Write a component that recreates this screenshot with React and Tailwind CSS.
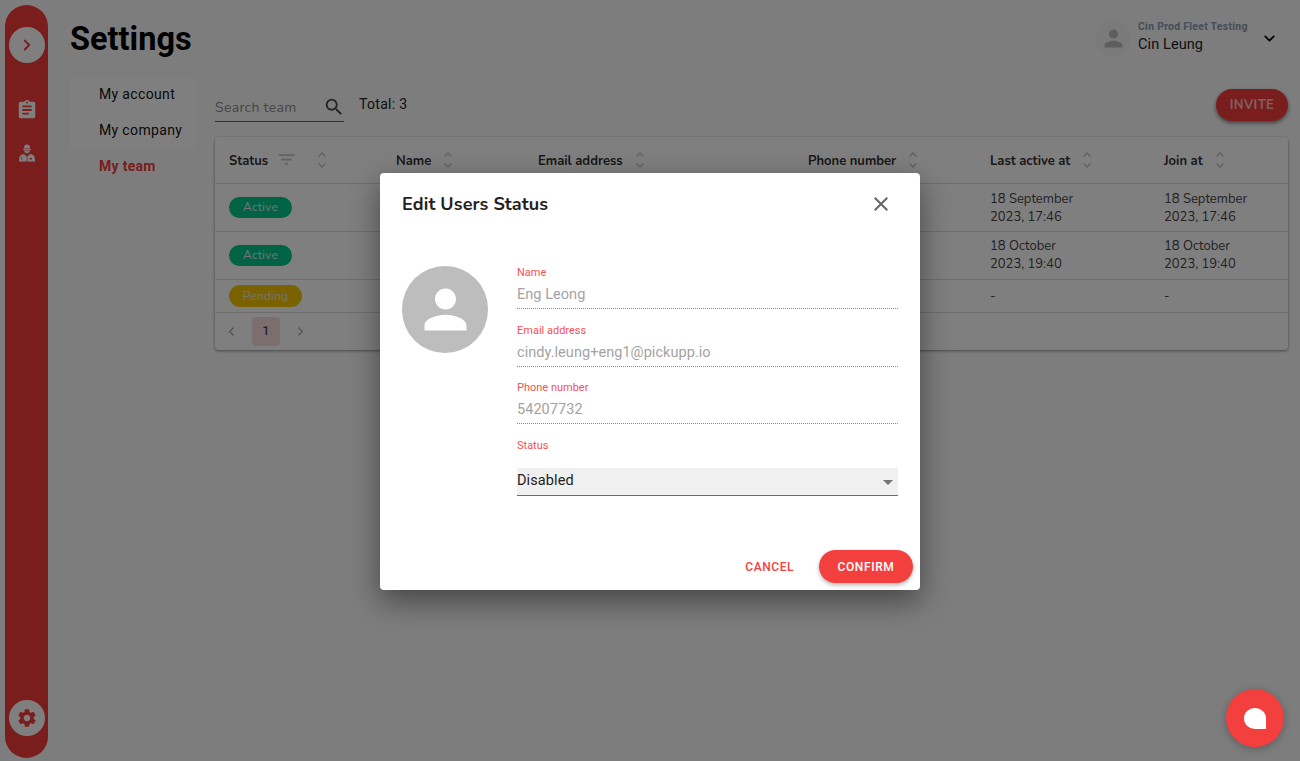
import { ChevronDown, ChevronLeft, ChevronRight } from "lucide-react";
import { MdSettings, MdAssignment, MdPerson, MdSearch, MdClose, MdFilterList } from "react-icons/md";

const nunito = "font-['Nunito','Lato','Noto_Sans',sans-serif]";

const columns = [
    { label: "Status", width: "w-[167px]", filter: true },
    { label: "Name", width: "w-[142px]" },
    { label: "Email address", width: "w-[270px]" },
    { label: "Phone number", width: "w-[182px]" },
    { label: "Last active at", width: "w-[174px]" },
    { label: "Join at", width: "w-[138px]" },
];

const rows = [
    { status: "Active", date: ["18 September", "2023, 17:46"], height: "h-[48px]", pad: "pt-[2px]" },
    { status: "Active", date: ["18 October", "2023, 19:40"], height: "h-[48px]", pad: "pt-0" },
    { status: "Pending", date: ["-"], height: "h-[33px]", pad: "pt-0" },
];

const SortIcon = () => (
    <svg width="8" height="16" viewBox="0 0 8 16" fill="none" stroke="currentColor" strokeWidth="1.5" className="shrink-0 text-[#c4c4c4]">
        <polyline points="0.5,4.5 4,1 7.5,4.5" />
        <polyline points="0.5,11.5 4,15 7.5,11.5" />
    </svg>
);

// hard hat person from the sidebar, no package has this one
const WorkerIcon = ({ className }) => (
    <svg width="16" height="18" viewBox="0 0 16 18" fill="currentColor" className={className}>
        <path d="M4.8 4.4C4.8 2 6.2.4 8 .4s3.2 1.6 3.2 4z" />
        <rect x="4" y="4.9" width="8" height="1" rx=".5" />
        <path d="M5 6.4h6C10.8 8 9.6 9.2 8 9.2S5.2 8 5 6.4z" />
        <path d="M5 10l3 3L11 10c2.6.5 4.4 1.6 4.7 3.4l.3 4.2H0l.3-4.2C.6 11.6 2.4 10.5 5 10z" />
        <rect x="10.4" y="14" width="2.6" height="1.4" fill="#f43a3a" />
        <rect x="7.6" y="13.4" width=".8" height="4.2" fill="#f43a3a" />
        <rect x="2.4" y="12.6" width=".8" height="3" fill="#f43a3a" />
    </svg>
);

const StatusBadge = ({ status }) => (
    <span
        className={`inline-flex items-center justify-center rounded-full text-[12px] leading-none text-[#e9e9e9] tracking-[0.2px] ${nunito} ${
            status === "Active" ? "h-[21px] w-[63px] bg-[#00c686]" : "h-[22px] w-[73px] bg-[#f5c400]"
        }`}
    >
        {status}
    </span>
);

const Field = ({ label, value }) => (
    <div className="h-[57.5px]">
        <div className="text-[11px] leading-[14px] text-[#f45252]">{label}</div>
        <div className="mt-[5px] h-[24px] border-b border-dotted border-[#8a8a8a] text-[14.5px] leading-[20px] tracking-[0.05px] text-[#a3a3a3]">
            {value}
        </div>
    </div>
);

const TeamTable = () => (
    <div className="rounded bg-white shadow-[0_1px_3px_rgba(0,0,0,0.45)]">
        <table className="w-full table-fixed border-collapse">
            <thead>
                <tr className="h-[46px] border-b border-[#dcdcdc]">
                    {columns.map((col) => (
                        <th key={col.label} className={`${col.width} pl-[14px] text-left`}>
                            <div className={`flex items-center gap-[13px] text-[13px] font-bold text-[#333] ${nunito}`}>
                                <span className="pt-[4px]">{col.label}</span>
                                {col.filter && <MdFilterList size={21} className="ml-[-5px] mr-[8px] text-[#c4c4c4]" />}
                                <SortIcon />
                            </div>
                        </th>
                    ))}
                </tr>
            </thead>
            <tbody>
                {rows.map((row, i) => (
                    <tr key={i} className={`${row.height} border-b border-[#dcdcdc]`}>
                        <td className="pb-[2px] pl-[14px]"><StatusBadge status={row.status} /></td>
                        <td />
                        <td />
                        <td />
                        {[0, 1].map((c) => (
                            <td key={c} className={`pl-[14px] ${row.pad} text-[13px] leading-[18px] text-[#444] ${nunito}`}>
                                {row.date.map((d) => <div key={d}>{d}</div>)}
                            </td>
                        ))}
                    </tr>
                ))}
            </tbody>
        </table>
        <div className="flex h-[37px] items-center pl-[9px] text-[#a8a8a8]">
            <ChevronLeft size={15} strokeWidth={1.75} />
            <span className="mx-[13px] flex h-[29px] w-[28px] items-center justify-center rounded bg-[#f8dcdc] text-[13px] text-[#333]">1</span>
            <ChevronRight size={15} strokeWidth={1.75} />
        </div>
    </div>
);

const Page = () => (
    <div className="flex h-[761px] w-full bg-[#fbfbfb]">
        <aside className="my-[5px] ml-[5px] flex h-[753px] w-[43px] shrink-0 flex-col items-center rounded-full bg-[#f43a3a] py-[22px]">
            <div className="flex h-9 w-9 items-center justify-center rounded-full bg-white text-[#f43a3a]">
                <ChevronRight size={18} strokeWidth={2.5} />
            </div>
            <MdAssignment size={22} className="mt-[36px] text-white" />
            <WorkerIcon className="mt-[23px] text-white" />
            <div className="mt-auto flex h-9 w-9 items-center justify-center rounded-full bg-white text-[#f43a3a]">
                <MdSettings size={22} />
            </div>
        </aside>

        <main className="min-w-0 flex-1 pl-[22px] pr-[12px]">
            <header className="flex h-[73px] items-start justify-between">
                <h1 className="mt-[15px] text-[32.5px] font-bold leading-[48px] text-black">Settings</h1>
                <div className="mt-[20px] flex items-start">
                    <div className="flex h-9 w-9 items-center justify-center rounded-full bg-[#f5f5f5] text-[#bdbdbd]">
                        <MdPerson size={27} />
                    </div>
                    <div className="ml-[7px] w-[123px]">
                        <div className="text-[10.5px] font-bold leading-[13px] tracking-[0.25px] text-[#8d9ab5]">Cin Prod Fleet Testing</div>
                        <div className="mt-[2px] text-[14.5px] leading-[20px] tracking-[0.1px] text-[#222]">Cin Leung</div>
                    </div>
                    <ChevronDown size={17} strokeWidth={2.5} className="mt-[10px] text-black" />
                    <div className="w-[10px]" />
                </div>
            </header>

            <div className="flex">
                <nav className="mt-[5px] h-[72px] w-[127px] shrink-0 bg-white pl-[29px] pt-[5px] text-[14px] text-[#111]">
                    <div className="h-9 leading-[22px] tracking-[0.35px]">My account</div>
                    <div className="h-9 leading-[22px] tracking-[0.35px]">My company</div>
                    <div className="h-9 font-bold leading-[22px] tracking-[0.3px] text-[#f43a3a]">My team</div>
                </nav>

                <section className="ml-[18px] min-w-0 flex-1">
                    <div className="flex h-[64px] items-start justify-between">
                        <div className="flex items-start">
                            <div className={`mt-[16px] flex h-[33px] w-[129px] items-center justify-between border-b border-[#666] pt-[4px] text-[14px] tracking-[0.3px] text-[#8a8a8a] ${nunito}`}>
                                Search team
                                <MdSearch size={22} className="mr-[-1px] text-[#444]" />
                            </div>
                            <div className="ml-[15px] mt-[21px] text-[14px] leading-[20px] tracking-[0.3px] text-[#222]">Total: 3</div>
                        </div>
                        <button className={`mt-[16px] h-[32px] w-[72px] rounded-full bg-[#f43a3a] pt-[1px] text-[13px] font-bold tracking-[0.4px] text-white/70 shadow-[0_2px_4px_rgba(0,0,0,0.5)] ${nunito}`}>
                            INVITE
                        </button>
                    </div>
                    <TeamTable />
                </section>
            </div>
        </main>
    </div>
);

const EditStatusModal = () => (
    <div className="absolute left-[380px] top-[173px] flex h-[417px] w-[540px] flex-col rounded bg-white shadow-[0_11px_30px_rgba(0,0,0,0.45)]">
        <div className="flex h-[62px] items-center justify-between pl-[22px] pr-[27px]">
            <h2 className={`text-[18px] font-bold leading-[60px] tracking-[0.1px] text-[#222] ${nunito}`}>Edit Users Status</h2>
            <MdClose size={24} className="text-[#666]" />
        </div>
        <div className="mt-[31px] flex px-[22px]">
            <div className="flex h-[87px] w-[86px] shrink-0 items-center justify-center rounded-full bg-[#bdbdbd] text-white">
                <MdPerson size={63} />
            </div>
            <div className="ml-[29px] min-w-0 flex-1">
                <Field label="Name" value="Eng Leong" />
                <Field label="Email address" value="cindy.leung+eng1@pickupp.io" />
                <Field label="Phone number" value="54207732" />
                <div className="text-[11px] leading-[14px] text-[#f45252]">Status</div>
                <div className="mt-[15px] flex h-[28px] items-center justify-between border-b border-[#e23c3c] bg-[#f0f0f0] pr-[5px] text-[14.5px] tracking-[0.1px] text-[#222]">
                    Disabled
                    <span className="mt-[3px] h-0 w-0 border-x-[5px] border-t-[5px] border-x-transparent border-t-[#757575]" />
                </div>
            </div>
        </div>
        <div className="mt-auto flex items-center justify-end pb-[7px] pr-[7px]">
            <button className="text-[12px] font-medium tracking-[0.55px] text-[#f43f3f]">CANCEL</button>
            <button className="ml-[25px] h-[33px] w-[94px] rounded-full bg-[#f43f3f] text-[12px] font-medium tracking-[0.6px] text-white shadow-[0_2px_4px_rgba(0,0,0,0.3)]">
                CONFIRM
            </button>
        </div>
    </div>
);

export default function App() {
    return (
        <div className="relative h-[761px] w-full overflow-hidden font-['Roboto',sans-serif]">
            <Page />
            <div className="absolute inset-0 bg-black/50" />
            <EditStatusModal />
            <button className="absolute left-[1226px] top-[689px] flex h-[58px] w-[58px] items-center justify-center rounded-full bg-[#f43f3f] shadow-[0_2px_8px_rgba(0,0,0,0.25)]">
                <span className="h-[21px] w-[22px] rounded-[50%_50%_0_50%] bg-white" />
            </button>
        </div>
    );
}
